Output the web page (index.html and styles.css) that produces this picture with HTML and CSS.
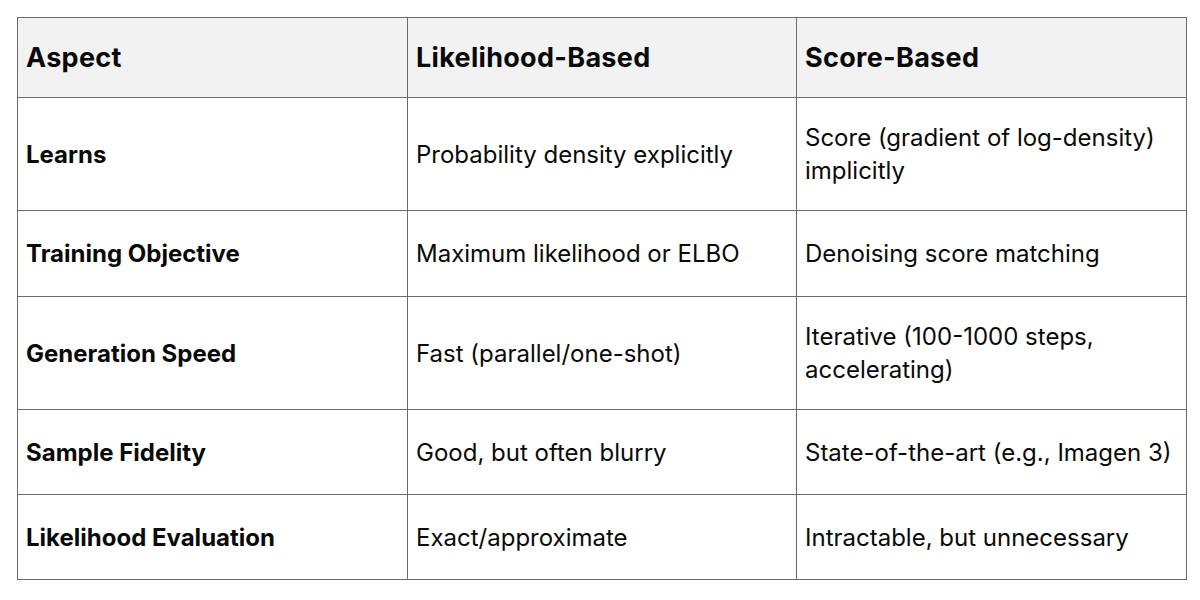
FILE: index.html
```html
<!DOCTYPE html>
<html>
<head>
<meta charset="utf-8">
<link rel="stylesheet" href="styles.css">
</head>
<body>
<table class="cmp">
  <colgroup><col class="c1"><col class="c2"><col class="c3"></colgroup>
  <thead>
    <tr class="head"><th>Aspect</th><th>Likelihood-Based</th><th>Score-Based</th></tr>
  </thead>
  <tbody>
    <tr class="r-tall"><td class="lbl">Learns</td><td>Probability density explicitly</td><td>Score (gradient of log-density) implicitly</td></tr>
    <tr class="r-short"><td class="lbl">Training Objective</td><td>Maximum likelihood or ELBO</td><td>Denoising score matching</td></tr>
    <tr class="r-tall"><td class="lbl">Generation Speed</td><td>Fast (parallel/one-shot)</td><td>Iterative (100-1000 steps, accelerating)</td></tr>
    <tr class="r-last"><td class="lbl">Sample Fidelity</td><td>Good, but often blurry</td><td>State-of-the-art (e.g., Imagen 3)</td></tr>
    <tr class="r-last"><td class="lbl">Likelihood Evaluation</td><td>Exact/approximate</td><td>Intractable, but unnecessary</td></tr>
  </tbody>
</table>
</body>
</html>
```
FILE: styles.css
```css
html, body { margin: 0; padding: 0; background: #ffffff; }
body { padding: 17px 0 0 17px; font-family: "Inter", "Liberation Sans", sans-serif; color: #0a0a0a; }
.cmp { border-collapse: collapse; width: 1169px; table-layout: fixed; }
.c1 { width: 390px; } .c2 { width: 389px; } .c3 { width: 390px; }
.cmp th, .cmp td { border: 1px solid #6b6b6b; padding: 0 8px; text-align: left; vertical-align: middle; font-size: 24px; line-height: 33px; }
.head th { background: #f2f2f2; height: 79px; font-size: 27px; font-weight: 700; letter-spacing: 0.3px; }
.cmp td { font-weight: 400; }
.cmp td.lbl { font-weight: 700; }
.r-tall td { height: 112px; }
.r-short td { height: 85px; }
.r-last td { height: 84px; }
```
